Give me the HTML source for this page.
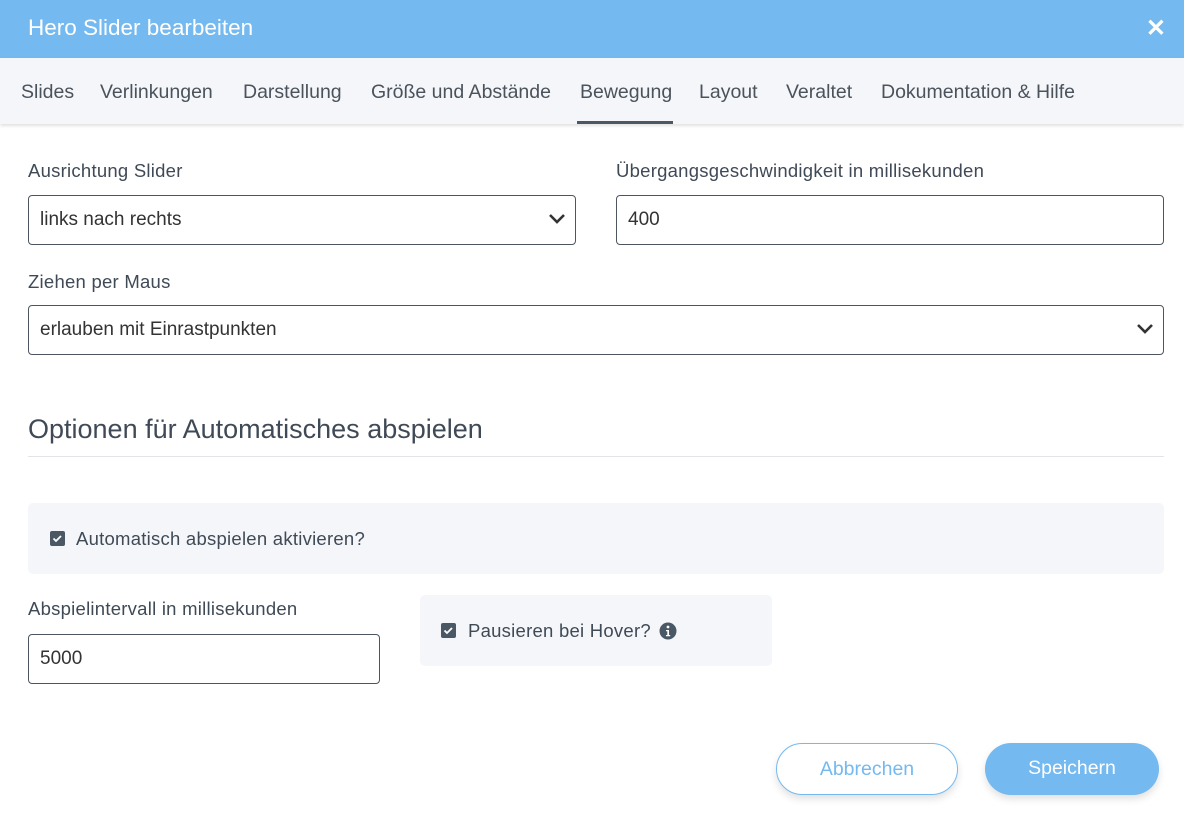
<!DOCTYPE html>
<html><head><meta charset="utf-8"><style>
*{box-sizing:border-box;margin:0;padding:0}
body{width:1184px;height:822px;background:#fff;font-family:"Liberation Sans",sans-serif;color:#3f4a56;position:relative;overflow:hidden}
.hdr{position:absolute;left:0;top:0;width:1184px;height:58px;background:#74b9ef;color:#fff;font-size:22.5px}
.hdr span{position:absolute;left:28px;top:15px}
.x{position:absolute;right:18px;top:14px;font-size:24px;font-weight:bold}
.tabs{position:absolute;left:0;top:58px;width:1184px;height:66px;background:#f5f6fa;box-shadow:0 2px 3px rgba(0,0,0,.12)}
.tab{position:absolute;top:23px;font-size:19.5px;color:#4a535c;white-space:nowrap}
.ul{position:absolute;left:577px;top:121px;width:96px;height:3px;background:#4a5866}
.lbl{position:absolute;font-size:18.5px;letter-spacing:.25px;color:#3f4a56;white-space:nowrap}
.inp{position:absolute;border:1px solid #4d5660;border-radius:4px;height:50px;font-size:19px;padding:13px 11px;color:#333}
.chev{position:absolute;right:9px;top:17px}
.h2{position:absolute;left:28px;top:414px;font-size:27px;color:#3f4a56}
.hr{position:absolute;left:28px;top:456px;width:1136px;height:1px;background:#e2e4e8}
.box{position:absolute;background:#f5f6fa;border-radius:5px}
.cb{position:absolute;width:15px;height:15px;background:#4a5866;border-radius:2px}
.btn{position:absolute;top:743px;height:52px;border-radius:26px;font-size:19.5px;text-align:center;line-height:50px;box-shadow:0 4px 8px rgba(0,0,0,.12)}
</style></head><body>
<div class="hdr"><span>Hero Slider bearbeiten</span><div class="x">✕</div></div>
<div class="tabs">
<div class="tab" style="left:21px">Slides</div>
<div class="tab" style="left:100px">Verlinkungen</div>
<div class="tab" style="left:243px">Darstellung</div>
<div class="tab" style="left:371px">Größe und Abstände</div>
<div class="tab" style="left:580px">Bewegung</div>
<div class="tab" style="left:699px">Layout</div>
<div class="tab" style="left:786px">Veraltet</div>
<div class="tab" style="left:881px">Dokumentation &amp; Hilfe</div>
</div>
<div class="ul"></div>
<div class="lbl" style="left:28px;top:160px">Ausrichtung Slider</div>
<div class="inp" style="left:28px;top:195px;width:548px">links nach rechts<svg class="chev" width="18" height="12" viewBox="0 0 18 12"><path d="M2 2l7 7 7-7" stroke="#333" stroke-width="2.6" fill="none"/></svg></div>
<div class="lbl" style="left:616px;top:160px">Übergangsgeschwindigkeit in millisekunden</div>
<div class="inp" style="left:616px;top:195px;width:548px">400</div>
<div class="lbl" style="left:28px;top:271px">Ziehen per Maus</div>
<div class="inp" style="left:28px;top:305px;width:1136px">erlauben mit Einrastpunkten<svg class="chev" width="18" height="12" viewBox="0 0 18 12"><path d="M2 2l7 7 7-7" stroke="#333" stroke-width="2.6" fill="none"/></svg></div>
<div class="h2">Optionen für Automatisches abspielen</div>
<div class="hr"></div>
<div class="box" style="left:28px;top:503px;width:1136px;height:71px"></div>
<div class="cb" style="left:50px;top:531px"><svg width="15" height="15" viewBox="0 0 15 15"><path d="M3.5 7.5l2.5 2.5 5-5" stroke="#fff" stroke-width="1.8" fill="none"/></svg></div>
<div class="lbl" style="left:76px;top:528px">Automatisch abspielen aktivieren?</div>
<div class="lbl" style="left:28px;top:598px">Abspielintervall in millisekunden</div>
<div class="inp" style="left:28px;top:634px;width:352px">5000</div>
<div class="box" style="left:420px;top:595px;width:352px;height:71px"></div>
<div class="cb" style="left:441px;top:623px"><svg width="15" height="15" viewBox="0 0 15 15"><path d="M3.5 7.5l2.5 2.5 5-5" stroke="#fff" stroke-width="1.8" fill="none"/></svg></div>
<div class="lbl" style="left:468px;top:620px">Pausieren bei Hover?</div>
<svg style="position:absolute;left:659px;top:622px" width="18" height="18" viewBox="0 0 18 18"><circle cx="9" cy="9" r="8.5" fill="#4a5866"/><circle cx="9" cy="5" r="1.4" fill="#fff"/><path d="M7 8h3v5h1.2v1.3H7V13h1.3V9.3H7z" fill="#fff"/></svg>
<div class="btn" style="left:776px;width:182px;border:1px solid #74b9ef;color:#74b9ef;background:#fff">Abbrechen</div>
<div class="btn" style="left:985px;width:174px;background:#74b9ef;color:#fff">Speichern</div>
</body></html>
